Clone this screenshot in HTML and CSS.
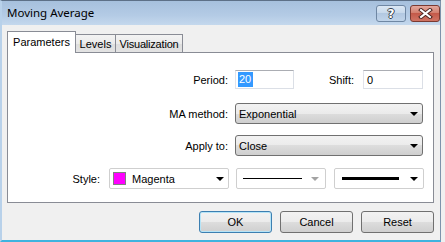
FILE: index.html
```html
<!DOCTYPE html>
<html lang="en">
<head>
    <meta charset="UTF-8">
    <title>Moving Average</title>
    <link rel="stylesheet" href="styles.css">
</head>
<body>
    <div class="window">
        <div class="titlebar">
            <span class="title">Moving Average</span>
            <div class="caption-btns">
                <span class="cap-btn help"><span class="qmark">?</span></span>
                <span class="cap-btn close">
                    <svg width="15" height="11" viewBox="0 0 15 11">
                        <path d="M3 2 L12 9 M12 2 L3 9" stroke="#4a2420" stroke-width="4" stroke-linecap="square"/>
                        <path d="M3 2 L12 9 M12 2 L3 9" stroke="#fff" stroke-width="2" stroke-linecap="square"/>
                    </svg>
                </span>
            </div>
        </div>
        <div class="client">
            <div class="tabs">
                <span class="tab active">Parameters</span>
                <span class="tab tab-levels">Levels</span>
                <span class="tab tab-vis">Visualization</span>
            </div>
            <div class="panel">
                <div class="row row-period">
                    <label class="lbl lbl-wide">Period:</label>
                    <span class="edit edit-period"><span class="sel">20</span></span>
                    <label class="lbl lbl-shift">Shift:</label>
                    <span class="edit edit-shift">0</span>
                </div>
                <div class="row row-method">
                    <label class="lbl lbl-wide">MA method:</label>
                    <div class="combo">Exponential<span class="arrow"></span></div>
                </div>
                <div class="row row-apply">
                    <label class="lbl lbl-wide">Apply to:</label>
                    <div class="combo">Close<span class="arrow"></span></div>
                </div>
                <div class="row row-style">
                    <label class="lbl lbl-style">Style:</label>
                    <div class="pick pick-color"><span class="swatch"></span>Magenta<span class="arrow"></span></div>
                    <div class="pick pick-line"><span class="line thin"></span><span class="arrow dim"></span></div>
                    <div class="pick pick-line pick-thick"><span class="line thick"></span><span class="arrow"></span></div>
                </div>
            </div>
            <div class="actions">
                <button class="btn default">OK</button>
                <button class="btn">Cancel</button>
                <button class="btn">Reset</button>
            </div>
        </div>
    </div>
</body>
</html>
```

FILE: styles.css
```css
* {
    box-sizing: border-box;
}

body {
    margin: 0;
    background-color: #f0f0f0;
    font-family: "Liberation Sans", Arial, sans-serif;
    font-size: 11px;
    color: #000;
}

.window {
    width: 441px;
    height: 242px;
    background-color: #f0f0f0;
    border-top: 1px solid #5d7087;
    border-left: 2px solid #b8d1ea;
    border-right: 1px solid #7d93ab;
    border-bottom: 2px solid #3fb3df;
}

/* title bar */

.titlebar {
    height: 24px;
    display: flex;
    align-items: center;
    justify-content: space-between;
    padding: 0 0 0 5px;
    background: linear-gradient(#a6c0dd, #b4cbe5 60%, #c4d8ed);
}

.title {
    font-family: "Noto Sans", sans-serif;
    font-size: 11.5px;
    padding-bottom: 2px;
}

.caption-btns {
    display: flex;
    gap: 4px;
    align-self: flex-start;
    margin-top: 4px;
}

.cap-btn {
    width: 30px;
    height: 17px;
    border-radius: 3px;
    display: flex;
    align-items: center;
    justify-content: center;
}

.help {
    border: 1px solid #6f87a3;
    background: linear-gradient(#dbe7f4, #c5d7ea 50%, #b2c8e1 50%, #c0d4ea);
}

.qmark {
    font-family: "DejaVu Sans", sans-serif;
    font-weight: bold;
    font-size: 12px;
    color: #fff;
    text-shadow: 1px 0 #39414c, -1px 0 #39414c, 0 1px #39414c, 0 -1px #39414c;
}

.close {
    border: 1px solid #7a3a32;
    background: linear-gradient(#e3a89e, #d3806f 45%, #c45a4a 50%, #d07464);
}

/* client area */

.client {
    padding: 6px 5px 0 5px;
}

.tabs {
    display: flex;
    align-items: flex-end;
    height: 21px;
}

.tab {
    height: 18px;
    padding-top: 3px;
    text-align: center;
    border: 1px solid #898c95;
    border-bottom: none;
    background: linear-gradient(#f3f3f3, #ebebeb 50%, #dddddd 50%, #e3e3e3);
    margin-left: -1px;
}

.tab.active {
    height: 22px;
    margin-bottom: -1px;
    margin-left: 0;
    padding-top: 4px;
    background: #fff;
    position: relative;
    z-index: 1;
    width: 69px;
}

.tab-levels {
    width: 41px;
}

.tab-vis {
    width: 68px;
    letter-spacing: -0.2px;
}

.panel {
    width: 427px;
    height: 151px;
    border: 1px solid #898c95;
    background-color: #fff;
    padding-top: 17px;
}

.row {
    display: flex;
    align-items: center;
}

.row-method {
    margin-top: 14px;
}

.row-apply {
    margin-top: 11px;
}

.row-style {
    margin-top: 12px;
}

.lbl {
    text-align: right;
}

.lbl-wide {
    width: 220px;
    margin-right: 7px;
}

.lbl-shift {
    width: 60px;
    margin-right: 9px;
}

.lbl-style {
    width: 92px;
    margin-right: 9px;
}

.edit {
    height: 19px;
    border: 1px solid #dbdfe6;
    border-top-color: #abadb3;
    border-left-color: #e2e3ea;
    display: flex;
    align-items: center;
    padding-left: 2px;
    background-color: #fff;
}

.edit-period {
    width: 59px;
}

.edit-shift {
    width: 60px;
    padding-left: 3px;
}

.sel {
    background-color: #3399ff;
    color: #fff;
    line-height: 15px;
    padding: 0 2px 0 1px;
}

.combo {
    width: 188px;
    height: 21px;
    border: 1px solid #707070;
    border-radius: 3px;
    background: linear-gradient(#f2f2f2, #ebebeb 50%, #dddddd 50%, #cfcfcf);
    display: flex;
    align-items: center;
    justify-content: space-between;
    padding: 0 4px 0 3px;
}

.arrow {
    width: 0;
    height: 0;
    border-left: 4px solid transparent;
    border-right: 4px solid transparent;
    border-top: 4px solid #000;
}

.arrow.dim {
    border-top-color: #a3a3a3;
}

.pick {
    height: 21px;
    border: 1px solid #cfcfcf;
    border-radius: 2px;
    background-color: #fff;
    display: flex;
    align-items: center;
    padding: 0 4px 0 3px;
}

.pick-color {
    width: 120px;
    margin-right: 7px;
}

.pick-color .arrow {
    margin-left: auto;
}

.swatch {
    width: 13px;
    height: 13px;
    border: 1px solid #808080;
    background-color: #ff00ff;
    margin-right: 6px;
}

.pick-line {
    width: 90px;
    justify-content: space-between;
    padding: 0 6px 0 6px;
}

.pick-thick {
    margin-left: 8px;
    padding: 0 5px 0 7px;
}

.line {
    width: 59px;
    height: 1px;
    background-color: #000;
}

.line.thick {
    width: 57px;
    height: 3px;
}

/* buttons */

.actions {
    display: flex;
    justify-content: flex-end;
    gap: 8px;
    width: 427px;
    margin-top: 8px;
}

.btn {
    width: 73px;
    height: 22px;
    border: 1px solid #707070;
    border-radius: 3px;
    background: linear-gradient(#f2f2f2, #ebebeb 50%, #dddddd 50%, #cfcfcf);
    font-family: "Liberation Sans", Arial, sans-serif;
    font-size: 11px;
    color: #000;
    padding: 0;
}

.btn.default {
    border-color: #3c7fb1;
    box-shadow: inset 0 0 0 1px #b6e4f7;
}
```
